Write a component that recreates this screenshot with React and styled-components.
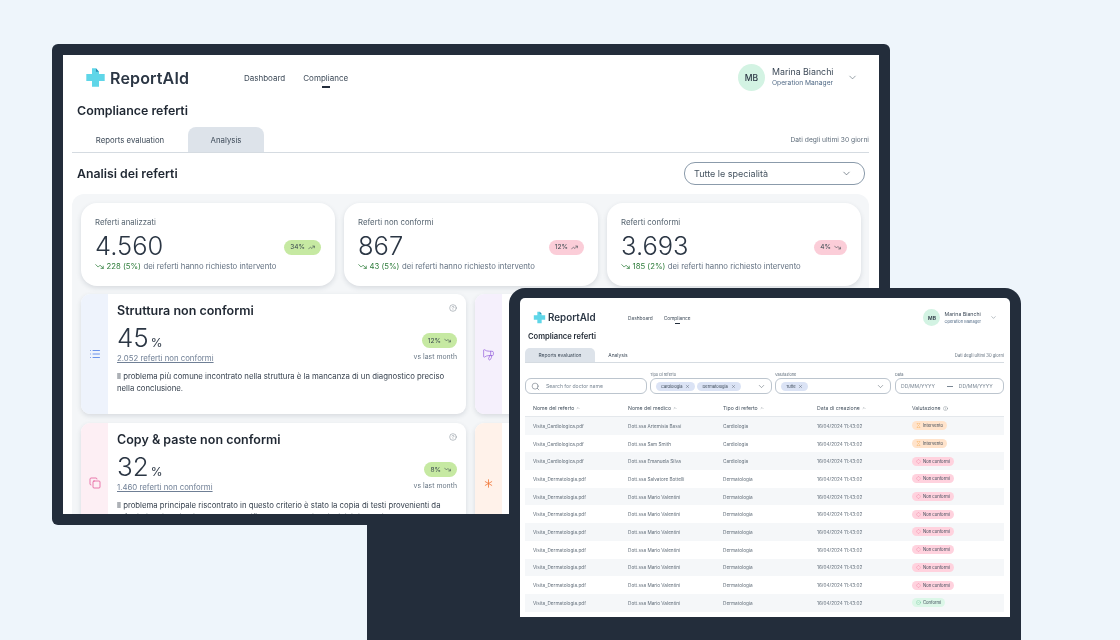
import React from "react";
import styled, { createGlobalStyle } from "styled-components";
import {
  ChevronDown, CircleHelp, Copy, List, Megaphone, Asterisk, Search, X, Info,
  TrendingUp, TrendingDown, Diamond, Hourglass, CircleCheck, ChevronUp,
} from "lucide-react";

const Global = createGlobalStyle`
  html, body { margin: 0; padding: 0; background: #eef5fb; }
  body { font-family: "Inter", "Liberation Sans", sans-serif; color: #2b3644; }
  * { box-sizing: border-box; }
`;

const dark = "#232d3b";
const headFont = `"Inter", "Liberation Sans", sans-serif`;

const Logo = ({ size }) => (
  <svg width={size} height={size} viewBox="0 0 24 24">
    <path d="M8 1.5h4.5L16 5.5V8h6.5v8H16v6.5H8V16H1.5V8H8z" fill="#5fd6e8" />
    <path d="M12.5 1.5L16 5.5h-3.5z" fill="#2f8fb5" />
  </svg>
);

const kpis = [
  { label: "Referti analizzati", value: "4.560", pct: "34%", up: true, tone: "green", n: "228 (5%)" },
  { label: "Referti non conformi", value: "867", pct: "12%", up: true, tone: "pink", n: "43 (5%)" },
  { label: "Referti conformi", value: "3.693", pct: "4%", up: false, tone: "pink", n: "185 (2%)" },
];

const rows = [
  ["Visita_Cardiologica.pdf", "Dott.ssa Artemisia Bassi", "Cardiologia", "Intervento"],
  ["Visita_Cardiologica.pdf", "Dott.ssa Sam Smith", "Cardiologia", "Intervento"],
  ["Visita_Cardiologica.pdf", "Dott.ssa Emanuela Silva", "Cardiologia", "Non conformi"],
  ["Visita_Dermatologia.pdf", "Dott.ssa Salvatore Bottelli", "Dermatologia", "Non conformi"],
  ["Visita_Dermatologia.pdf", "Dott.ssa Mario Valentini", "Dermatologia", "Non conformi"],
  ["Visita_Dermatologia.pdf", "Dott.ssa Mario Valentini", "Dermatologia", "Non conformi"],
  ["Visita_Dermatologia.pdf", "Dott.ssa Mario Valentini", "Dermatologia", "Non conformi"],
  ["Visita_Dermatologia.pdf", "Dott.ssa Mario Valentini", "Dermatologia", "Non conformi"],
  ["Visita_Dermatologia.pdf", "Dott.ssa Mario Valentini", "Dermatologia", "Non conformi"],
  ["Visita_Dermatologia.pdf", "Dott.ssa Mario Valentini", "Dermatologia", "Non conformi"],
  ["Visita_Dermatologia.pdf", "Dott.ssa Mario Valentini", "Dermatologia", "Conformi"],
];

const statusIcon = { Intervento: Hourglass, "Non conformi": Diamond, Conformi: CircleCheck };

const App = () => {
  return (
    <Stage>
      <Global />
      <Stand />
      <Laptop>
        <Screen>
          <Header>
            <Brand>
              <Logo size={21} />
              <BrandName>ReportAId</BrandName>
            </Brand>
            <Nav>
              <NavLink>Dashboard</NavLink>
              <NavLink $active>Compliance</NavLink>
            </Nav>
            <User>
              <Avatar>MB</Avatar>
              <UserText>
                <UserName>Marina Bianchi</UserName>
                <UserRole>Operation Manager</UserRole>
              </UserText>
              <ChevronDown size={11} strokeWidth={1.3} color="#55636f" />
            </User>
          </Header>
          <PageTitle>Compliance referti</PageTitle>
          <Tabs>
            <Tab>Reports evaluation</Tab>
            <Tab $active>Analysis</Tab>
            <TabNote>Dati degli ultimi 30 giorni</TabNote>
          </Tabs>
          <SectionRow>
            <SectionTitle>Analisi dei referti</SectionTitle>
            <SpecialtySelect>
              Tutte le specialità
              <ChevronDown size={11} strokeWidth={1.4} color="#44525f" />
            </SpecialtySelect>
          </SectionRow>
          <Panel>
            <KpiRow>
              {kpis.map((k) => (
                <KpiCard key={k.label}>
                  <KpiLabel>{k.label}</KpiLabel>
                  <KpiMain>
                    <KpiValue>{k.value}</KpiValue>
                    <KpiPill $tone={k.tone}>
                      {k.pct}
                      {k.up ? <TrendingUp size={7} /> : <TrendingDown size={7} />}
                    </KpiPill>
                  </KpiMain>
                  <KpiSub>
                    <TrendingDown size={9} color="#2f7d3c" />
                    <b>{k.n}</b> dei referti hanno richiesto intervento
                  </KpiSub>
                </KpiCard>
              ))}
            </KpiRow>
            <CardGrid>
              <Criterion>
                <Strip $bg="#eef3fc" $fg="#3f74e6"><List size={12} strokeWidth={1.5} /></Strip>
                <CriterionBody>
                  <CriterionTitle>
                    Struttura non conformi
                    <CircleHelp size={8} strokeWidth={1.3} color="#67737f" />
                  </CriterionTitle>
                  <MetricRow>
                    <div>
                      <Metric>45<small>%</small></Metric>
                      <MetricLink>2.052 referti non conformi</MetricLink>
                    </div>
                    <MetricSide>
                      <Pill $tone="green">12%<TrendingDown size={7} /></Pill>
                      <VsLabel>vs last month</VsLabel>
                    </MetricSide>
                  </MetricRow>
                  <Description>
                    Il problema più comune incontrato nella struttura è la mancanza di un diagnostico preciso nella conclusione.
                  </Description>
                </CriterionBody>
              </Criterion>
              <Criterion>
                <Strip $bg="#f5f0fc" $fg="#9460dc"><FlippedIcon><Megaphone size={13} strokeWidth={1.3} /></FlippedIcon></Strip>
                <CriterionBody />
              </Criterion>
              <Criterion>
                <Strip $bg="#fdeff4" $fg="#e0478e"><Copy size={12} strokeWidth={1.4} /></Strip>
                <CriterionBody>
                  <CriterionTitle>
                    Copy &amp; paste non conformi
                    <CircleHelp size={8} strokeWidth={1.3} color="#67737f" />
                  </CriterionTitle>
                  <MetricRow>
                    <div>
                      <Metric>32<small>%</small></Metric>
                      <MetricLink>1.460 referti non conformi</MetricLink>
                    </div>
                    <MetricSide>
                      <Pill $tone="green">8%<TrendingDown size={7} /></Pill>
                      <VsLabel>vs last month</VsLabel>
                    </MetricSide>
                  </MetricRow>
                  <Description>
                    Il problema principale riscontrato in questo criterio è stato la copia di testi provenienti da referti di altri pazienti, senza una verifica accurata dei dati clinici riportati nel documento.
                  </Description>
                </CriterionBody>
              </Criterion>
              <Criterion>
                <Strip $bg="#fff2ea" $fg="#f0783a"><Asterisk size={15} strokeWidth={1.3} /></Strip>
                <CriterionBody />
              </Criterion>
            </CardGrid>
          </Panel>
        </Screen>
      </Laptop>

      <Tablet>
        <Notch />
        <TabletScreen>
          <SmallHeader>
            <SmallBrand>
              <Logo size={13} />
              <SmallBrandName>ReportAId</SmallBrandName>
            </SmallBrand>
            <SmallNav>
              <SmallNavLink>Dashboard</SmallNavLink>
              <SmallNavLink $active>Compliance</SmallNavLink>
            </SmallNav>
            <SmallUser>
              <SmallAvatar>MB</SmallAvatar>
              <div>
                <SmallName>Marina Bianchi</SmallName>
                <SmallRole>Operation Manager</SmallRole>
              </div>
              <ChevronDown size={7} strokeWidth={1.4} color="#55636f" />
            </SmallUser>
          </SmallHeader>
          <SmallTitle>Compliance referti</SmallTitle>
          <SmallTabs>
            <SmallTab $active>Reports evaluation</SmallTab>
            <SmallTab>Analysis</SmallTab>
            <SmallNote>Dati degli ultimi 30 giorni</SmallNote>
          </SmallTabs>
          <Filters>
            <FilterField $w={122}>
              <FieldBox>
                <Search size={9} strokeWidth={1.3} />
                <Placeholder>Search for doctor name</Placeholder>
              </FieldBox>
            </FilterField>
            <FilterField $w={122}>
              <FieldLabel>Tipo di referto</FieldLabel>
              <FieldBox>
                <Chip>Cardiologia<X size={5} strokeWidth={1.6} /></Chip>
                <Chip>Dermatologia<X size={5} strokeWidth={1.6} /></Chip>
                <FieldArrow><ChevronDown size={9} strokeWidth={1.3} /></FieldArrow>
              </FieldBox>
            </FilterField>
            <FilterField $w={116}>
              <FieldLabel>Valutazione</FieldLabel>
              <FieldBox>
                <Chip>Tutte<X size={5} strokeWidth={1.6} /></Chip>
                <FieldArrow><ChevronDown size={9} strokeWidth={1.3} /></FieldArrow>
              </FieldBox>
            </FilterField>
            <FilterField $w={109} $gap={1}>
              <FieldLabel>Data</FieldLabel>
              <FieldBox>
                <Placeholder>DD/MM/YYYY</Placeholder>
                <DateDash />
                <Placeholder>DD/MM/YYYY</Placeholder>
              </FieldBox>
            </FilterField>
          </Filters>
          <Table>
            <TableHead>
              <span>Nome del referto <ChevronUp size={4} /></span>
              <span>Nome del medico <ChevronUp size={4} /></span>
              <span>Tipo di referto <ChevronUp size={4} /></span>
              <span>Data di creazione <ChevronUp size={4} /></span>
              <span>Valutazione <Info size={5} strokeWidth={1.3} /></span>
            </TableHead>
            {rows.map((r, i) => {
              const Icon = statusIcon[r[3]];
              return (
                <TableRow key={i} $striped={i % 2 === 0}>
                  <span>{r[0]}</span>
                  <span>{r[1]}</span>
                  <span>{r[2]}</span>
                  <span>16/04/2024 11:43:02</span>
                  <span>
                    <Status $kind={r[3]}><Icon size={5} strokeWidth={1.3} />{r[3]}</Status>
                  </span>
                </TableRow>
              );
            })}
          </Table>
        </TabletScreen>
      </Tablet>
    </Stage>
  );
};

export default App;

const Stage = styled.div`
  position: relative;
  width: 1120px;
  height: 640px;
  overflow: hidden;
  background: #eef5fb;
  filter: blur(0.35px);
`;

const Stand = styled.div`
  position: absolute;
  left: 367px;
  top: 500px;
  width: 200px;
  height: 140px;
  background: ${dark};
`;

const Laptop = styled.div`
  position: absolute;
  left: 52px;
  top: 44px;
  width: 838px;
  height: 481px;
  padding: 11px;
  border-radius: 6px;
  background: ${dark};
`;

const Screen = styled.div`
  width: 816px;
  height: 459px;
  padding: 0 10px 0 9px;
  overflow: hidden;
  background: #fff;
`;

const Header = styled.header`
  display: flex;
  align-items: center;
  height: 43px;
  padding: 2px 0 0 13px;
`;

const Brand = styled.div`
  display: flex;
  align-items: center;
  gap: 4px;
  width: 159px;
`;

const BrandName = styled.span`
  font-family: ${headFont};
  font-size: 16px;
  font-weight: 600;
  letter-spacing: 0.15px;
  color: #2b3644;
`;

const Nav = styled.nav`
  display: flex;
  gap: 18px;
`;

const NavLink = styled.a`
  position: relative;
  font-size: 8px;
  color: #3d4a58;
  &::after {
    content: "";
    display: ${(p) => (p.$active ? "block" : "none")};
    position: absolute;
    left: 19px;
    top: 13px;
    width: 8px;
    height: 2px;
    background: ${dark};
  }
`;

const User = styled.div`
  display: flex;
  align-items: center;
  margin-left: auto;
  padding-right: 11px;
  gap: 7px;
`;

const Avatar = styled.div`
  display: flex;
  align-items: center;
  justify-content: center;
  width: 27px;
  height: 27px;
  border-radius: 50%;
  background: #d3f3e3;
  font-size: 8.5px;
  font-weight: 500;
  color: #2b3644;
`;

const UserText = styled.div`
  width: 68px;
`;

const UserName = styled.div`
  font-size: 8.8px;
  line-height: 12px;
  color: #3d4a58;
`;

const UserRole = styled.div`
  font-size: 6.7px;
  line-height: 11px;
  color: #516a86;
`;

const PageTitle = styled.h1`
  margin: 3px 0 0 5px;
  font-family: ${headFont};
  font-size: 12.4px;
  line-height: 20px;
  font-weight: 600;
  color: #1f2732;
`;

const Tabs = styled.div`
  display: flex;
  align-items: stretch;
  height: 26px;
  margin-top: 6px;
  border-bottom: 1px solid #d5dbe1;
`;

const Tab = styled.div`
  display: flex;
  align-items: center;
  justify-content: center;
  width: ${(p) => (p.$active ? "76px" : "116px")};
  border-radius: 8px 8px 0 0;
  background: ${(p) => (p.$active ? "#dde3ea" : "transparent")};
  font-size: 7.8px;
  color: #3d4a58;
`;

const TabNote = styled.div`
  align-self: center;
  margin-left: auto;
  font-size: 6.7px;
  color: #5e6c7a;
`;

const SectionRow = styled.div`
  display: flex;
  align-items: center;
  justify-content: space-between;
  height: 23px;
  margin-top: 9px;
  padding: 0 4px 0 5px;
`;

const SectionTitle = styled.h2`
  margin: 0;
  font-family: ${headFont};
  font-size: 12.3px;
  font-weight: 600;
  color: #1f2732;
`;

const SpecialtySelect = styled.div`
  display: flex;
  align-items: center;
  justify-content: space-between;
  width: 181px;
  height: 23px;
  padding: 0 12px 0 9px;
  border: 1px solid #8b9bab;
  border-radius: 11px;
  font-size: 9px;
  color: #44525f;
`;

const Panel = styled.div`
  margin-top: 9px;
  padding: 9px 8px 0 9px;
  height: 330px;
  border-radius: 12px 12px 0 0;
  background: #f4f6f8;
`;

const KpiRow = styled.div`
  display: grid;
  grid-template-columns: repeat(3, 254px);
  gap: 9px;
`;

const KpiCard = styled.div`
  height: 83px;
  padding: 14px 14px 0;
  border-radius: 16px;
  background: #fff;
  box-shadow: 0 2px 5px rgba(40, 55, 75, 0.14);
`;

const KpiLabel = styled.div`
  font-size: 7.8px;
  line-height: 10px;
  color: #55636f;
`;

const KpiMain = styled.div`
  display: flex;
  align-items: center;
  justify-content: space-between;
  height: 28px;
  margin-top: 4px;
`;

const KpiValue = styled.div`
  font-family: ${headFont};
  font-size: 25.5px;
  font-weight: 300;
  color: #2b3644;
`;

const pillTones = { green: "#c6e9a2", pink: "#fbcdd8" };

const Pill = styled.span`
  display: inline-flex;
  align-items: center;
  gap: 3px;
  height: 15px;
  padding: 0 6px;
  border-radius: 8px;
  background: ${(p) => pillTones[p.$tone]};
  font-size: 6.6px;
  color: #3c4a50;
`;

const KpiPill = styled(Pill)`
  margin-top: 4px;
`;

const KpiSub = styled.div`
  display: flex;
  align-items: center;
  gap: 2.5px;
  margin-top: 1px;
  font-size: 7.75px;
  line-height: 12px;
  color: #627080;
  b {
    font-weight: 400;
    color: #2f7d3c;
  }
`;

const CardGrid = styled.div`
  display: grid;
  grid-template-columns: repeat(2, 385px);
  grid-auto-rows: 120px;
  gap: 9px;
  margin-top: 8px;
`;

const Criterion = styled.article`
  display: flex;
  overflow: hidden;
  border-radius: 9px;
  background: #fff;
  box-shadow: 0 2px 5px rgba(40, 55, 75, 0.14);
`;

const Strip = styled.div`
  display: flex;
  align-items: center;
  justify-content: center;
  flex: 0 0 27px;
  background: ${(p) => p.$bg};
  color: ${(p) => p.$fg};
`;

const FlippedIcon = styled.span`
  display: flex;
  transform: scaleX(-1);
`;

const CriterionBody = styled.div`
  flex: 1;
  padding: 8px 9px 0;
`;

const CriterionTitle = styled.h3`
  display: flex;
  justify-content: space-between;
  align-items: flex-start;
  margin: 0;
  font-family: ${headFont};
  font-size: 12.5px;
  line-height: 18px;
  font-weight: 600;
  color: #1f2732;
  svg {
    margin: 2px 0 0;
  }
`;

const MetricRow = styled.div`
  display: flex;
  justify-content: space-between;
  margin-top: 4px;
`;

const Metric = styled.div`
  height: 28px;
  font-family: ${headFont};
  font-size: 26px;
  line-height: 27px;
  font-weight: 300;
  color: #2b3644;
  small {
    margin-left: 2px;
    font-size: 12px;
    line-height: 0;
    font-weight: 400;
  }
`;

const MetricLink = styled.a`
  display: block;
  font-size: 7.8px;
  line-height: 12px;
  color: #6f7f95;
  text-decoration: underline;
`;

const MetricSide = styled.div`
  display: flex;
  flex-direction: column;
  align-items: flex-end;
  justify-content: flex-start;
  padding-top: 9px;
`;

const VsLabel = styled.div`
  margin-top: 4px;
  font-size: 6.9px;
  line-height: 10px;
  color: #6a7886;
`;

const Description = styled.p`
  margin: 7px 0 0;
  font-size: 7.78px;
  line-height: 11.7px;
  color: #333e4b;
`;

const Tablet = styled.div`
  position: absolute;
  left: 509px;
  top: 288px;
  width: 512px;
  height: 360px;
  padding: 10px 11px;
  border-radius: 16px 16px 0 0;
  background: ${dark};
`;

const Notch = styled.div`
  position: absolute;
  left: 226px;
  top: 10px;
  width: 59px;
  height: 11px;
  border-radius: 0 0 3px 3px;
  background: ${dark};
`;

const TabletScreen = styled.div`
  width: 490px;
  height: 319px;
  padding: 0 6px 0 5px;
  overflow: hidden;
  border-radius: 5px 5px 0 0;
  background: #fff;
  filter: blur(0.25px);
`;

const SmallHeader = styled.header`
  display: flex;
  align-items: center;
  height: 28px;
  padding: 11px 0 0 8px;
`;

const SmallBrand = styled.div`
  display: flex;
  align-items: center;
  gap: 2px;
  width: 95px;
`;

const SmallBrandName = styled.span`
  font-family: ${headFont};
  font-size: 9.8px;
  font-weight: 600;
  color: #2b3644;
`;

const SmallNav = styled.nav`
  display: flex;
  gap: 11px;
`;

const SmallNavLink = styled.a`
  position: relative;
  font-size: 4.8px;
  color: #3d4a58;
  &::after {
    content: "";
    display: ${(p) => (p.$active ? "block" : "none")};
    position: absolute;
    left: 11px;
    top: 8px;
    width: 5px;
    height: 1px;
    background: ${dark};
  }
`;

const SmallUser = styled.div`
  display: flex;
  align-items: center;
  gap: 4px;
  margin-left: auto;
  padding-right: 7px;
  svg {
    margin-left: 5px;
  }
`;

const SmallAvatar = styled.div`
  display: flex;
  align-items: center;
  justify-content: center;
  width: 17px;
  height: 17px;
  border-radius: 50%;
  background: #d3f3e3;
  font-size: 5px;
  font-weight: 600;
`;

const SmallName = styled.div`
  font-size: 5.2px;
  line-height: 7px;
  color: #3d4a58;
`;

const SmallRole = styled.div`
  font-size: 4px;
  line-height: 7px;
  color: #516a86;
`;

const SmallTitle = styled.h1`
  margin: 5px 0 0 3px;
  font-family: ${headFont};
  font-size: 7.6px;
  line-height: 12px;
  font-weight: 600;
  color: #1f2732;
`;

const SmallTabs = styled.div`
  display: flex;
  height: 15px;
  margin-top: 5px;
  border-bottom: 1px solid #d5dbe1;
`;

const SmallTab = styled.div`
  display: flex;
  align-items: center;
  justify-content: center;
  width: ${(p) => (p.$active ? "70px" : "46px")};
  border-radius: 5px 5px 0 0;
  background: ${(p) => (p.$active ? "#dde3ea" : "transparent")};
  font-size: 4.9px;
  color: #3d4a58;
`;

const SmallNote = styled.div`
  align-self: center;
  margin-left: auto;
  font-size: 4.2px;
  color: #5e6c7a;
`;

const Filters = styled.div`
  display: flex;
  align-items: flex-end;
  gap: 3px;
  height: 31px;
`;

const FilterField = styled.div`
  flex: 0 0 ${(p) => p.$w}px;
  margin-left: ${(p) => p.$gap || 0}px;
`;

const FieldLabel = styled.div`
  font-size: 3.9px;
  line-height: 6px;
  color: #5e6c7a;
`;

const FieldBox = styled.div`
  display: flex;
  align-items: center;
  gap: 2px;
  height: 16px;
  padding: 0 5px;
  border: 1px solid #bcc5ce;
  border-radius: 6px;
  color: #4a5764;
`;

const Placeholder = styled.span`
  font-size: 5.1px;
  color: #7a8794;
  svg + & {
    margin-left: 4px;
  }
`;

const DateDash = styled.i`
  width: 6px;
  height: 1px;
  margin: 0 4px 0 10px;
  background: #7a8794;
`;

const Chip = styled.span`
  display: inline-flex;
  align-items: center;
  gap: 3px;
  height: 9px;
  padding: 0 5px;
  border-radius: 5px;
  background: #dbe3f5;
  font-size: 4px;
  color: #364352;
`;

const FieldArrow = styled.span`
  display: flex;
  margin-left: auto;
`;

const Table = styled.div`
  margin-top: 6px;
`;

const columns = "95px 95px 94px 95px 1fr";

const TableHead = styled.div`
  display: grid;
  grid-template-columns: ${columns};
  align-items: center;
  height: 17px;
  padding-left: 8px;
  border-bottom: 1px solid #e4e8ec;
  font-size: 5.2px;
  color: #45525f;
  span {
    display: flex;
    align-items: center;
    gap: 2px;
  }
`;

const TableRow = styled.div`
  display: grid;
  grid-template-columns: ${columns};
  align-items: center;
  height: 17.7px;
  padding-left: 8px;
  background: ${(p) => (p.$striped ? "#f5f7f9" : "#fff")};
  font-size: 4.7px;
  color: #606c78;
`;

const statusTones = {
  Intervento: { bg: "#ffe3cb", icon: "#f2a33c" },
  "Non conformi": { bg: "#ffd2de", icon: "#e5587e" },
  Conformi: { bg: "#dcf7e8", icon: "#49b97f" },
};

const Status = styled.span`
  display: inline-flex;
  align-items: center;
  gap: 2px;
  height: 9px;
  padding: 0 4px;
  border-radius: 5px;
  background: ${(p) => statusTones[p.$kind].bg};
  font-size: 4.2px;
  color: #3d4a58;
  svg {
    color: ${(p) => statusTones[p.$kind].icon};
  }
`;
